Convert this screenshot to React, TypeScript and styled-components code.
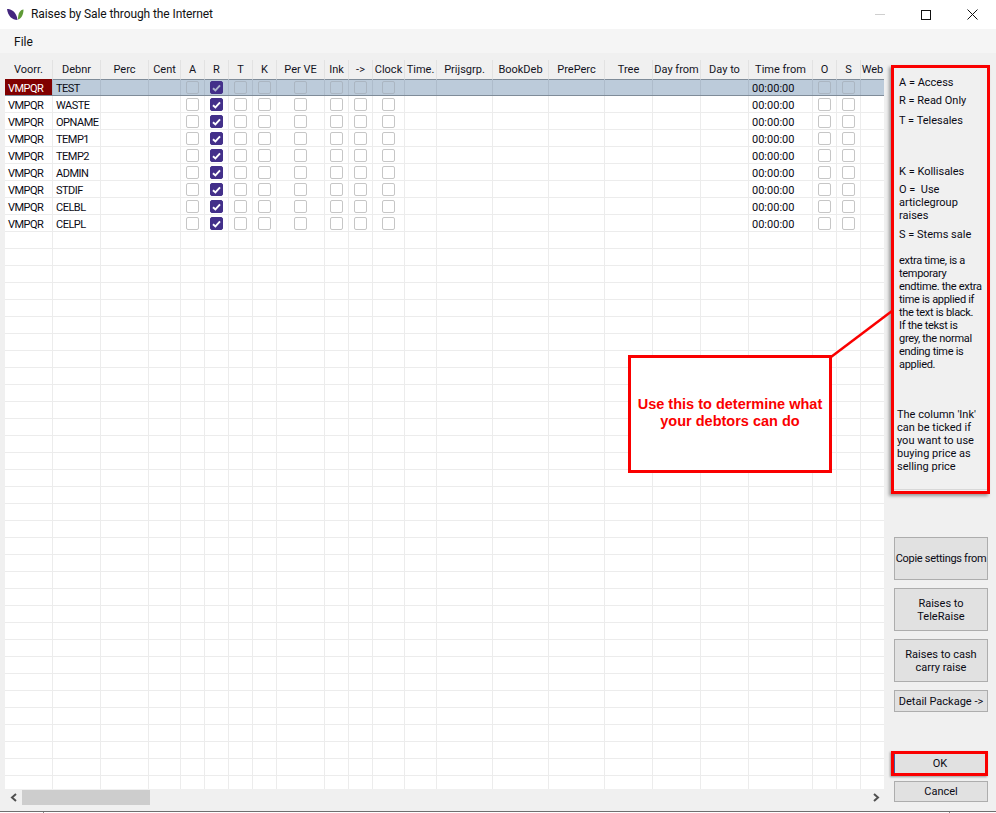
import React from "react";
import styled, { createGlobalStyle } from "styled-components";

const Global = createGlobalStyle`
  html, body { margin: 0; padding: 0; background: #fff; }
  #root { width: 996px; height: 813px; overflow: hidden; }
`;

const Window = styled.div`
  position: relative;
  width: 996px;
  height: 813px;
  display: flex;
  flex-direction: column;
  overflow: hidden;
  background: #fff;
  font-family: Roboto, "Liberation Sans", Arial, sans-serif;
  font-size: 11px;
  color: #0a0a14;
`;

const TitleBar = styled.div`
  height: 29px;
  flex: none;
  display: flex;
  align-items: center;
  background: #fff;
  padding: 0 1px 0 7px;
`;

const AppTitle = styled.span`
  margin-left: 7px;
  padding-bottom: 2px;
  font-size: 12px;
  letter-spacing: -0.09px;
  color: #111;
  flex: 1;
  white-space: nowrap;
`;

const WindowButton = styled.div<{ $w: number }>`
  width: ${(p) => p.$w}px;
  height: 29px;
  display: flex;
  align-items: center;
  justify-content: center;
`;

const MenuBar = styled.div`
  height: 24px;
  flex: none;
  box-sizing: border-box;
  background: #f5f5f5;
  display: flex;
  align-items: center;
  padding: 1px 0 0 14px;
  font-size: 12px;
  color: #111;
`;

const Body = styled.div`
  flex: none;
  height: 758px;
  display: flex;
  background: #f0f0f0;
  border-bottom: 1px solid #6f6f6f;
`;

const GridPane = styled.div`
  width: 884px;
  flex: none;
  padding: 7px 0 0 5px;
  box-sizing: border-box;
  display: flex;
  flex-direction: column;
`;

const Table = styled.div`
  height: 729px;
  flex: none;
  overflow: hidden;
  background: #fff;
`;

const cols = "48px 48px 48px 32px 24px 24px 24px 24px 48px 24px 24px 32px 32px 56px 56px 56px 48px 48px 48px 64px 24px 24px 24px";

const HeaderRow = styled.div`
  display: grid;
  grid-template-columns: ${cols};
  height: 19px;
  background: #f0f0f0;
`;

const HeaderCell = styled.div`
  display: flex;
  align-items: center;
  justify-content: center;
  padding-bottom: 1px;
  box-sizing: border-box;
  border-right: 1px solid #e2e2e2;
  white-space: nowrap;
  overflow: hidden;
  color: #14141e;
`;

const Row = styled.div<{ $selected?: boolean }>`
  display: grid;
  grid-template-columns: ${cols};
  height: 17px;
  box-sizing: border-box;
  border-bottom: 1px solid ${(p) => (p.$selected ? "#7f8c99" : "#ececec")};
  background: ${(p) => (p.$selected ? "#bccbda" : "#fff")};
  ${(p) => (p.$selected ? "box-shadow: inset 0 1px 0 #7f8c99;" : "")}
`;

const Cell = styled.div<{ $selected?: boolean; $mark?: boolean }>`
  display: flex;
  box-sizing: border-box;
  align-items: ${(p) => (p.$mark ? "flex-start" : "center")};
  justify-content: ${(p) => (p.$mark ? "center" : "flex-start")};
  padding: ${(p) => (p.$mark ? "2px 0 0 0" : "2px 0 0 3px")};
  border-right: 1px solid ${(p) => (p.$selected ? "#aebccb" : "#ececec")};
  white-space: nowrap;
  overflow: hidden;
`;

const NameCell = styled(Cell)`
  letter-spacing: -0.5px;
`;

const CodeCell = styled(NameCell)<{ $active?: boolean }>`
  background: ${(p) => (p.$active ? "#800000" : "transparent")};
  color: ${(p) => (p.$active ? "#fff" : "inherit")};
`;

const Box = styled.div<{ $on?: boolean; $dim?: boolean }>`
  width: 13px;
  height: 13px;
  box-sizing: border-box;
  border-radius: 2px;
  display: flex;
  align-items: center;
  justify-content: center;
  border: 1px solid ${(p) => (p.$on ? "#43308a" : p.$dim ? "#abb6c2" : "#c6c6c6")};
  background: ${(p) => (p.$on ? "#43308a" : p.$dim ? "transparent" : "#fff")};
`;

const ScrollBar = styled.div`
  flex: 1;
  display: flex;
  align-items: flex-start;
  margin-left: -5px;
  padding-left: 5px;
`;

const ScrollArrow = styled.div`
  width: 17px;
  height: 16px;
  display: flex;
  align-items: center;
  justify-content: center;
  flex: none;
`;

const ScrollTrack = styled.div`
  flex: 1;
  height: 15px;
  padding-top: 1px;
`;

const ScrollThumb = styled.div`
  width: 128px;
  height: 15px;
  background: #cdcdcd;
`;

const SidePanel = styled.div`
  width: 112px;
  flex: none;
  display: flex;
  flex-direction: column;
  padding-top: 12px;
  box-sizing: border-box;
`;

const Legend = styled.div`
  width: 99px;
  height: 429px;
  flex: none;
  margin-left: 7px;
  box-sizing: border-box;
  border: 3px solid #fa0000;
  box-shadow: -2px 2px 3px #9a9a9a;
  padding-left: 5px;
  background: #f0f0f0;
  overflow: hidden;
  position: relative;

  &::after {
    content: "";
    position: absolute;
    left: 0;
    right: 0;
    bottom: 1px;
    height: 1px;
    background: #d8d8d8;
  }
`;

const Note = styled.div<{ $gap: number; $indent?: number; $tight?: boolean }>`
  margin-top: ${(p) => p.$gap}px;
  margin-left: ${(p) => p.$indent ?? 0}px;
  line-height: 13px;
  white-space: nowrap;
  letter-spacing: ${(p) => (p.$tight ? "-0.3px" : "normal")};
`;

const SideButton = styled.button<{ $h: number; $gap: number; $lift?: number; $tight?: boolean }>`
  display: block;
  width: 94px;
  height: ${(p) => p.$h}px;
  margin: ${(p) => p.$gap}px 0 0 10px;
  padding: 0 0 ${(p) => p.$lift ?? 0}px;
  flex: none;
  box-sizing: border-box;
  border: 1px solid #adadad;
  background: #e1e1e1;
  font: inherit;
  color: inherit;
  line-height: 13px;
  white-space: nowrap;
  letter-spacing: ${(p) => (p.$tight ? "-0.3px" : "normal")};
`;

const OkFrame = styled.div`
  width: 97px;
  height: 25px;
  margin: 39px 0 0 7px;
  flex: none;
  box-sizing: border-box;
  border: 3px solid #fa0000;
  box-shadow: -1px 1px 2px #9a9a9a;
`;

const OkButton = styled.button`
  display: block;
  width: 100%;
  height: 100%;
  padding: 0;
  border: 0;
  border-left: 1px solid #3f5f9f;
  background: #e1e1e1;
  font: inherit;
  color: inherit;
`;

const Callout = styled.div`
  position: absolute;
  left: 628px;
  top: 355px;
  width: 204px;
  height: 118px;
  box-sizing: border-box;
  padding-bottom: 2px;
  border: 3px solid #fa0000;
  background: #fff;
  color: #fa0000;
  font-family: "Liberation Sans", Arial, sans-serif;
  font-size: 14.5px;
  font-weight: 700;
  line-height: 17px;
  text-align: center;
  display: flex;
  align-items: center;
  justify-content: center;
`;

const Leader = styled.svg`
  position: absolute;
  left: 828px;
  top: 308px;
`;

const Edge = styled.div`
  flex: 1;
  background:
    linear-gradient(#8a8a8a, #8a8a8a) 43px 0 / 1px 100% no-repeat,
    linear-gradient(#8a8a8a, #8a8a8a) 949px 0 / 1px 100% no-repeat,
    #fff;
`;

const columns = ["Voorr.", "Debnr", "Perc", "Cent", "A", "R", "T", "K", "Per VE", "Ink", "->", "Clock", "Time.", "Prijsgrp.", "BookDeb", "PrePerc", "Tree", "Day from", "Day to", "Time from", "O", "S", "Web"];
const markCols = new Set(["A", "R", "T", "K", "Per VE", "Ink", "->", "Clock", "O", "S"]);
const debtors = ["TEST", "WASTE", "OPNAME", "TEMP1", "TEMP2", "ADMIN", "STDIF", "CELBL", "CELPL"];
const TOTAL_ROWS = 42;

function Check({ dim }: { dim: boolean }) {
  return (
    <svg width="9" height="8" viewBox="0 0 9 8">
      <path d="M1 4.2 L3.4 6.4 L8 1.4" fill="none" stroke={dim ? "#aeb6cc" : "#fff"} strokeWidth="1.9" />
    </svg>
  );
}

function DataRow({ index }: { index: number }) {
  const name = debtors[index];
  const selected = index === 0;
  if (!name) {
    return (
      <Row>
        {columns.map((c) => (
          <Cell key={c} />
        ))}
      </Row>
    );
  }
  return (
    <Row $selected={selected}>
      {columns.map((c) => {
        if (c === "Voorr.") {
          return (
            <CodeCell key={c} $selected={selected} $active={selected}>
              VMPQR
            </CodeCell>
          );
        }
        if (c === "Debnr") return <NameCell key={c} $selected={selected}>{name}</NameCell>;
        if (c === "Time from") return <Cell key={c} $selected={selected}>00:00:00</Cell>;
        if (markCols.has(c)) {
          const on = c === "R";
          return (
            <Cell key={c} $selected={selected} $mark>
              <Box $on={on} $dim={selected}>{on && <Check dim={selected} />}</Box>
            </Cell>
          );
        }
        return <Cell key={c} $selected={selected} />;
      })}
    </Row>
  );
}

export default function App() {
  return (
    <Window>
      <Global />
      <TitleBar>
        <svg width="17" height="11" viewBox="0 0 17 11">
          <path d="M0 0 C4 0 9.5 2.5 10.5 11 C5 11 1 7 0 0 Z" fill="#43267e" />
          <path d="M16.5 0.5 C13 1 11 4 11 10.5 C14.5 9.5 16.5 5.5 16.5 0.5 Z" fill="#5e9a35" />
        </svg>
        <AppTitle>Raises by Sale through the Internet</AppTitle>
        <WindowButton $w={46}>
          <svg width="10" height="1"><rect width="10" height="1" fill="#cfcfcf" /></svg>
        </WindowButton>
        <WindowButton $w={46}>
          <svg width="10" height="10"><rect x="0.5" y="0.5" width="9" height="9" fill="none" stroke="#111" /></svg>
        </WindowButton>
        <WindowButton $w={46}>
          <svg width="11" height="11"><path d="M0.5 0.5 L10.5 10.5 M10.5 0.5 L0.5 10.5" stroke="#111" /></svg>
        </WindowButton>
      </TitleBar>
      <MenuBar>File</MenuBar>
      <Body>
        <GridPane>
          <Table>
            <HeaderRow>
              {columns.map((c) => (
                <HeaderCell key={c}>{c}</HeaderCell>
              ))}
            </HeaderRow>
            {Array.from({ length: TOTAL_ROWS }, (_, i) => (
              <DataRow key={i} index={i} />
            ))}
          </Table>
          <ScrollBar>
            <ScrollArrow>
              <svg width="8" height="9" viewBox="0 0 8 9"><path d="M6 1 L2 4.5 L6 8" fill="none" stroke="#505050" strokeWidth="2" /></svg>
            </ScrollArrow>
            <ScrollTrack><ScrollThumb /></ScrollTrack>
            <ScrollArrow>
              <svg width="8" height="9" viewBox="0 0 8 9"><path d="M2 1 L6 4.5 L2 8" fill="none" stroke="#505050" strokeWidth="2" /></svg>
            </ScrollArrow>
          </ScrollBar>
        </GridPane>
        <SidePanel>
          <Legend>
            <Note $gap={8}>A = Access</Note>
            <Note $gap={5}>R = Read Only</Note>
            <Note $gap={7}>T = Telesales</Note>
            <Note $gap={38}>K = Kollisales</Note>
            <Note $gap={5}>O =&nbsp; Use<br />articlegroup<br />raises</Note>
            <Note $gap={6}>S = Stems sale</Note>
            <Note $gap={13} $tight>
              extra time, is a<br />temporary<br />endtime. the extra<br />time is applied if<br />the text is black.<br />If the tekst is<br />grey, the normal<br />ending time is<br />applied.
            </Note>
            <Note $gap={37} $indent={-2}>
              The column 'Ink'<br />can be ticked if<br />you want to use<br />buying price as<br />selling price
            </Note>
          </Legend>
          <SideButton $h={43} $gap={43} $tight>Copie settings from</SideButton>
          <SideButton $h={43} $gap={8}>Raises to<br />TeleRaise</SideButton>
          <SideButton $h={43} $gap={8}>Raises to cash<br />carry raise</SideButton>
          <SideButton $h={22} $gap={8}>Detail Package -&gt;</SideButton>
          <OkFrame><OkButton>OK</OkButton></OkFrame>
          <SideButton $h={21} $gap={5} $lift={1}>Cancel</SideButton>
        </SidePanel>
      </Body>
      <Edge />
      <Leader width="68" height="52" viewBox="0 0 68 52">
        <path d="M3 49 L64 3" stroke="#fa0000" strokeWidth="2.5" fill="none" />
      </Leader>
      <Callout>Use this to determine what<br />your debtors can do</Callout>
    </Window>
  );
}
